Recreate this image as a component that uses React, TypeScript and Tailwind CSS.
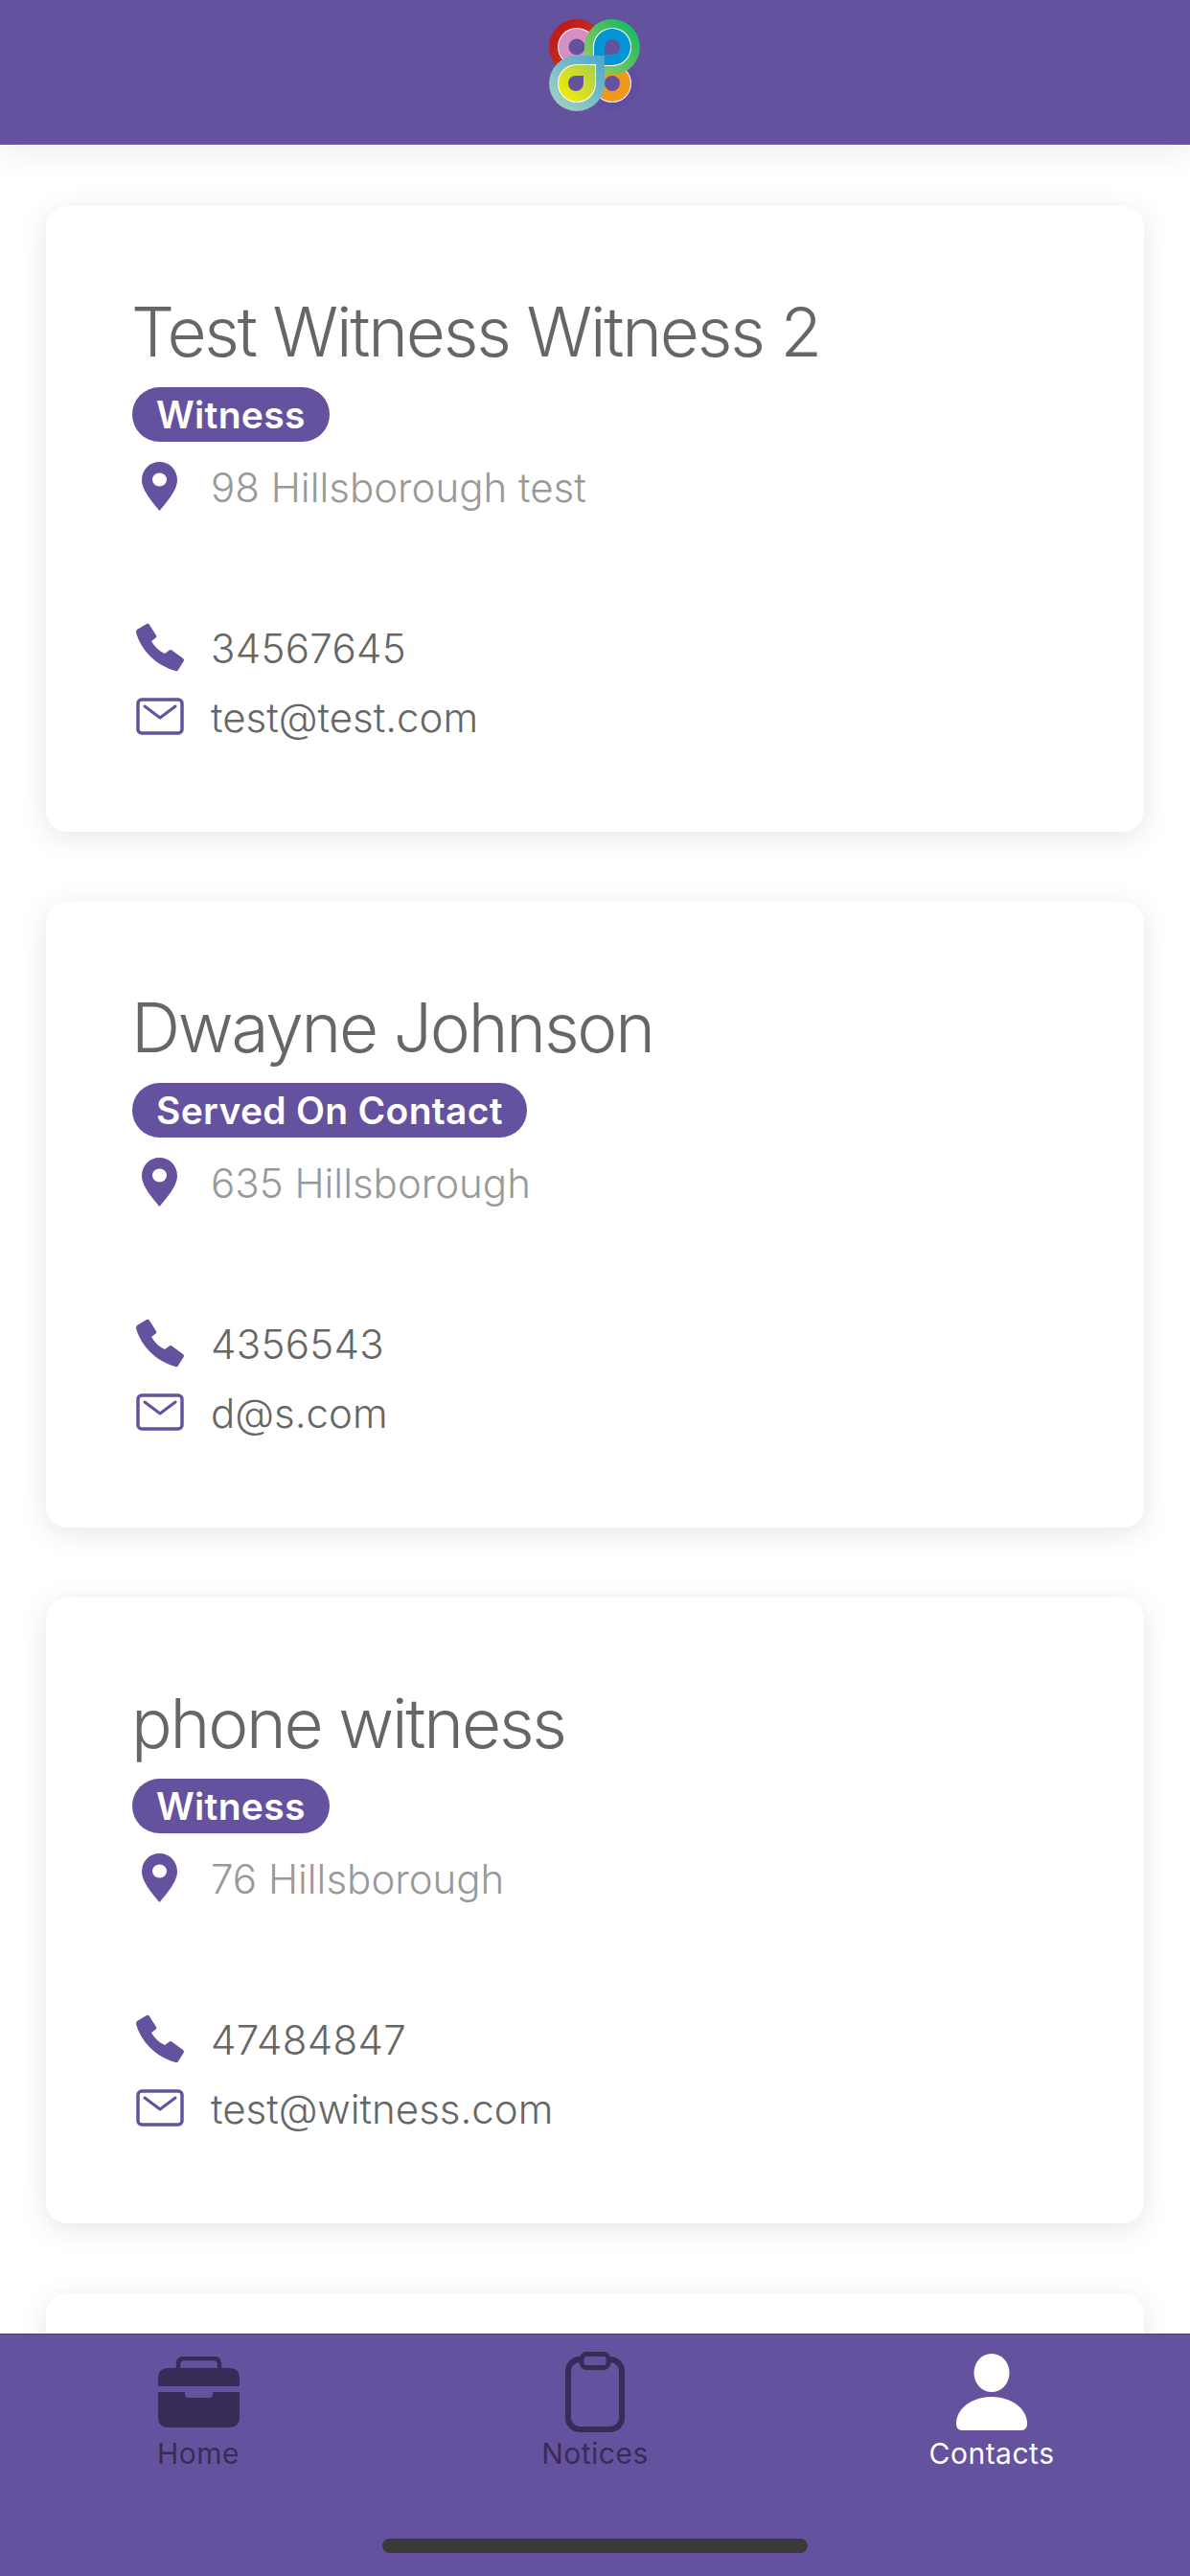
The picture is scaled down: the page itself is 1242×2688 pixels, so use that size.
import React from "react";

const contacts = [
  { name: "Test Witness Witness 2", role: "Witness", address: "98 Hillsborough test", phone: "34567645", email: "test@test.com" },
  { name: "Dwayne Johnson", role: "Served On Contact", address: "635 Hillsborough", phone: "4356543", email: "d@s.com" },
  { name: "phone witness", role: "Witness", address: "76 Hillsborough", phone: "47484847", email: "test@witness.com" },
];

const Logo = () => (
  <svg width="96" height="96" viewBox="0 0 96 96">
    <defs>
      <linearGradient id="red" x1="0" y1="0" x2="1" y2="1">
        <stop offset="0" stopColor="#c00f16" />
        <stop offset="1" stopColor="#c4492a" />
      </linearGradient>
      <linearGradient id="green" x1="0" y1="1" x2="1" y2="0">
        <stop offset="0" stopColor="#a3cf60" />
        <stop offset="1" stopColor="#05b562" />
      </linearGradient>
      <linearGradient id="teal" x1="0" y1="1" x2="1" y2="0">
        <stop offset="0" stopColor="#a8d6bd" />
        <stop offset="1" stopColor="#4ea5cf" />
      </linearGradient>
      <linearGradient id="yellow" x1="0" y1="1" x2="1" y2="0">
        <stop offset="0" stopColor="#fbee00" />
        <stop offset="1" stopColor="#a9cf4e" />
      </linearGradient>
    </defs>
    {/* bottom right */}
    <circle cx="66" cy="67" r="28" fill="#5f4ea4" />
    <circle cx="66" cy="67" r="20" fill="#fff" />
    <circle cx="66" cy="67" r="19" fill="#f0981c" />
    <circle cx="66" cy="67" r="8" fill="#64529f" />
    {/* top left */}
    <circle cx="29" cy="29" r="29" fill="url(#red)" />
    <circle cx="29" cy="29" r="20" fill="#fff" />
    <circle cx="29" cy="29" r="19" fill="#d68fc3" />
    <circle cx="29" cy="29" r="8.5" fill="#64529f" />
    {/* top right */}
    <path d="M37 29A29 29 0 0 1 95 29A29 29 0 0 1 66 58L37 58Z" fill="url(#green)" />
    <path d="M46 29A20 20 0 0 1 86 29A20 20 0 0 1 66 49L46 49Z" fill="#fff" />
    <path d="M47 29A19 19 0 0 1 85 29A19 19 0 0 1 66 48L47 48Z" fill="#0495d6" />
    <path d="M58 29A8 8 0 0 1 74 29A8 8 0 0 1 66 37L58 37Z" fill="#64529f" />
    {/* bottom left */}
    <path d="M0 67A29 29 0 0 1 29 38L58 38L58 67A29 29 0 0 1 0 67Z" fill="url(#teal)" />
    <path d="M9 67A20 20 0 0 1 29 47L49 47L49 67A20 20 0 0 1 9 67Z" fill="#fff" />
    <path d="M10 67A19 19 0 0 1 29 48L48 48L48 67A19 19 0 0 1 10 67Z" fill="url(#yellow)" />
    <path d="M20 67A8 8 0 0 1 28 59L36 59L36 67A8 8 0 0 1 20 67Z" fill="#64529f" />
  </svg>
);

const PinIcon = () => (
  <svg width="37" height="51" viewBox="0 0 37 51">
    <path d="M18.5 0C8 0 0 8 0 19C0 30 12 43 18.5 51C25 43 37 30 37 19C37 8 29 0 18.5 0Z" fill="#64529f" />
    <ellipse cx="18.5" cy="18.5" rx="7.5" ry="7" fill="#fff" />
  </svg>
);

const PhoneIcon = () => (
  <svg width="50" height="51" viewBox="0 0 50 51">
    <path d="M1 7L11 1Q13 0 14 2L21 13Q22 15 20 16L16 19Q21 28 30 32L34 29Q36 27 38 29L49 37Q51 39 49 41L44 49Q43 51 41 50C20 44 5 28 0 10Q0 8 1 7Z" fill="#64529f" />
  </svg>
);

const MailIcon = () => (
  <svg width="50" height="39" viewBox="0 0 50 39" fill="none" stroke="#64529f">
    <rect x="2" y="2" width="46" height="35" rx="4" strokeWidth="3.5" />
    <path d="M9 9L25 21L41 9" strokeWidth="3" strokeLinecap="round" strokeLinejoin="round" />
  </svg>
);

const BriefcaseIcon = () => (
  <svg width="85" height="74" viewBox="0 0 85 74" className="mb-[3px]">
    <path d="M21 13V8Q21 2 27 2H58Q64 2 64 8V13" fill="none" stroke="#372c57" strokeWidth="4.5" />
    <path d="M0 31V23Q0 12 11 12H74Q85 12 85 23V31Z" fill="#372c57" />
    <path d="M0 37H28V39Q28 43 32 43H53Q57 43 57 39V37H85V63Q85 74 74 74H11Q0 74 0 63Z" fill="#372c57" />
  </svg>
);

const ClipboardIcon = () => (
  <svg width="62" height="84" viewBox="0 0 62 84" fill="none" stroke="#372c57" className="mb-[-2px]">
    <rect x="3" y="8" width="56" height="73" rx="12" strokeWidth="6" />
    <rect x="17" y="2.5" width="28" height="14" rx="5" strokeWidth="5" fill="#64529f" />
  </svg>
);

const PersonIcon = () => (
  <svg width="74" height="80" viewBox="0 0 74 80">
    <ellipse cx="37" cy="20" rx="18.5" ry="20" fill="#fff" />
    <path d="M0 73C0 57 17 45 37 45C57 45 74 57 74 73Q74 80 68 80H6Q0 80 0 73Z" fill="#fff" />
  </svg>
);

const ContactCard = ({ contact }: { contact: (typeof contacts)[number] }) => (
  <div className="bg-white rounded-[22px] shadow-[0_6px_30px_rgba(0,0,0,0.1)] pl-[90px] pr-10 pt-[87px] pb-[101px] shrink-0">
    <h2 className="text-[71px] leading-[88px] font-light text-[#666666] tracking-[-2.2px] ml-[-1px]">{contact.name}</h2>
    <div className="mt-[14px] flex">
      <span className="bg-[#64529f] text-white font-semibold text-[39px] tracking-[0.3px] leading-[57px] h-[57px] px-[25px] rounded-full">
        {contact.role}
      </span>
    </div>
    <div className="mt-[21px] h-[51px] flex items-center">
      <div className="w-[82px] pl-[10px] flex shrink-0"><PinIcon /></div>
      <span className="text-[42px] font-light text-[#999999] pt-[2px]">{contact.address}</span>
    </div>
    <div className="mt-[117px] h-[51px] flex items-center">
      <div className="w-[82px] pl-[4px] flex shrink-0"><PhoneIcon /></div>
      <span className="text-[42px] font-light text-[#666666] tracking-[0.3px] pt-[2px]">{contact.phone}</span>
    </div>
    <div className="mt-[27px] h-[39px] flex items-center">
      <div className="w-[82px] pl-[4px] flex shrink-0"><MailIcon /></div>
      <span className="text-[42px] font-light text-[#666666] pt-[2px]">{contact.email}</span>
    </div>
  </div>
);

const NavItem = ({ icon, label, active }: { icon: React.ReactNode; label: string; active?: boolean }) => (
  <div className={`flex-1 flex flex-col items-center ${active ? "text-white" : "text-[#372c57]"}`}>
    <div className="h-[85px] flex items-end justify-center">{icon}</div>
    <span className="text-[30px] leading-[40px] tracking-[0.5px] mt-[4px]">{label}</span>
  </div>
);

export default function App() {
  return (
    <div className="h-[2688px] flex flex-col overflow-hidden bg-white" style={{ fontFamily: "Inter, 'Liberation Sans', sans-serif" }}>
      <header className="h-[151px] bg-[#64529f] flex justify-center pt-[20px] shrink-0 relative z-10 shadow-[0_8px_30px_rgba(0,0,0,0.08)]">
        <Logo />
      </header>

      <main className="flex-1 min-h-0 overflow-hidden px-[48px] pt-[64px] flex flex-col gap-[73px]">
        {contacts.map((contact) => (
          <ContactCard key={contact.name} contact={contact} />
        ))}
        <div className="bg-white rounded-[22px] shadow-[0_6px_30px_rgba(0,0,0,0.1)] h-[200px] shrink-0" />
      </main>

      <footer className="h-[253px] bg-[#64529f] border-t border-[#4a3d7a] shrink-0 relative z-10">
        <div className="flex pt-[15px]">
          <NavItem icon={<BriefcaseIcon />} label="Home" />
          <NavItem icon={<ClipboardIcon />} label="Notices" />
          <NavItem icon={<PersonIcon />} label="Contacts" active />
        </div>
        <div className="absolute left-[399px] top-[213px] w-[444px] h-[15px] rounded-full bg-[#3a3a3a]" />
      </footer>
    </div>
  );
}
